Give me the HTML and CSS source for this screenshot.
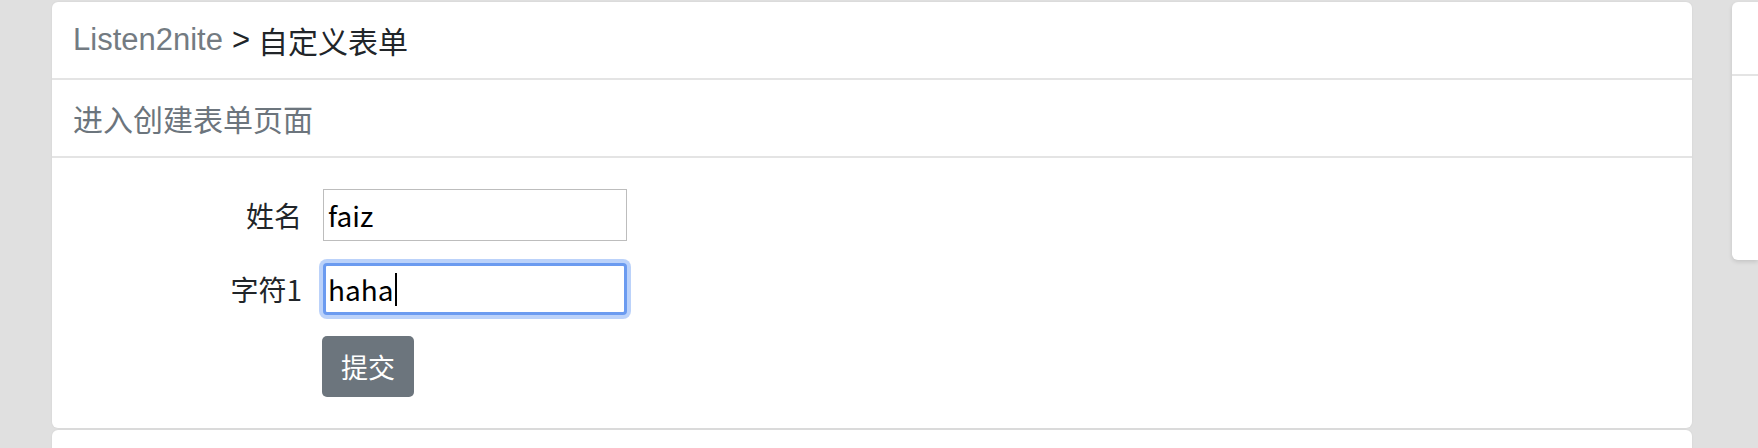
FILE: index.html
```html
<!DOCTYPE html>
<html lang="zh-CN">
<head>
<meta charset="utf-8">
<title>自定义表单</title>
<link rel="stylesheet" href="styles.css">
</head>
<body>
<div class="page">
  <main class="main">
    <section class="card">
      <div class="card-header">
        <span class="crumb-root">Listen2nite</span><span class="crumb-sep">&gt;</span><span class="crumb-current">自定义表单</span>
      </div>
      <div class="card-sub">进入创建表单页面</div>
      <form class="form">
        <label class="form-label" for="name">姓名</label>
        <input class="form-input" id="name" type="text" value="faiz">
        <label class="form-label" for="field1">字符1</label>
        <div class="form-input is-focused"><span>haha</span><span class="caret"></span></div>
        <div class="form-spacer"></div>
        <div class="form-actions"><button class="btn-submit" type="button">提交</button></div>
      </form>
    </section>
    <section class="card card-next"></section>
  </main>
  <aside class="side">
    <div class="side-card">
      <div class="side-header"></div>
    </div>
  </aside>
</div>
</body>
</html>
```

FILE: styles.css
```css
* { box-sizing: border-box; }
html, body { margin: 0; padding: 0; }
body {
  background: #e0e0e0;
  font-family: "Liberation Sans", "Noto Sans CJK SC", sans-serif;
  color: #212529;
  overflow: hidden;
  height: 448px;
}
.page {
  display: flex;
  gap: 40px;
  padding: 2px 0 0 52px;
}
.main {
  width: 1640px;
  flex: none;
  display: flex;
  flex-direction: column;
  gap: 2px;
}
.card {
  background: #fff;
  border-radius: 6px;
  box-shadow: 0 0 2px rgba(0,0,0,0.08);
}
.card-header {
  height: 78px;
  display: flex;
  align-items: center;
  padding: 0 21px;
  border-bottom: 2px solid #e4e4e4;
  font-size: 31px;
}
.crumb-root { color: #737b82; }
.crumb-sep { margin: 0 8px 0 9px; color: #212529; }
.crumb-current { color: #212529; font-family: "Noto Sans CJK SC", sans-serif; font-size: 30px; }
.card-sub {
  height: 78px;
  display: flex;
  align-items: center;
  padding: 0 21px;
  border-bottom: 2px solid #e4e4e4;
  font-size: 30px;
  color: #6c757d;
  font-family: "Noto Sans CJK SC", sans-serif;
}
.form {
  display: grid;
  grid-template-columns: 250px 304px;
  grid-auto-rows: auto;
  column-gap: 21px;
  row-gap: 22px;
  padding: 31px 0 31px 0;
  align-items: center;
}
.form-label {
  text-align: right;
  font-family: "Noto Sans CJK SC", sans-serif;
  font-size: 28px;
  color: #212529;
}
.form-input {
  height: 52px;
  width: 304px;
  border: 1px solid #bdbdbd;
  background: #fff;
  padding: 0 4px;
  font-family: "Noto Sans CJK SC", sans-serif;
  font-size: 28px;
  color: #000;
  outline: none;
  margin: 0;
  border-radius: 0;
  display: flex;
  align-items: center;
}
.form-input.is-focused {
  border: 3px solid #6b9bf0;
  border-radius: 4px;
  box-shadow: 0 0 0 4px rgba(120,165,245,0.5);
  padding: 0 2px;
}
.caret {
  display: inline-block;
  width: 2px;
  height: 33px;
  background: #000;
  margin-left: 1px;
}
.form-actions { display: flex; margin-top: -1px; }
.btn-submit {
  width: 92px;
  height: 61px;
  border: none;
  border-radius: 5px;
  background: #6c757d;
  color: #fff;
  font-family: "Noto Sans CJK SC", sans-serif;
  font-size: 27px;
  padding: 0;
  margin-left: -1px;
}
.card-next { height: 40px; border-radius: 6px 6px 0 0; }
.side { flex: none; width: 26px; }
.side-card {
  background: #fff;
  height: 258px;
  border-radius: 6px 0 0 6px;
  box-shadow: 0 2px 4px rgba(0,0,0,0.12);
}
.side-header {
  height: 74px;
  border-bottom: 2px solid #e4e4e4;
}
```
